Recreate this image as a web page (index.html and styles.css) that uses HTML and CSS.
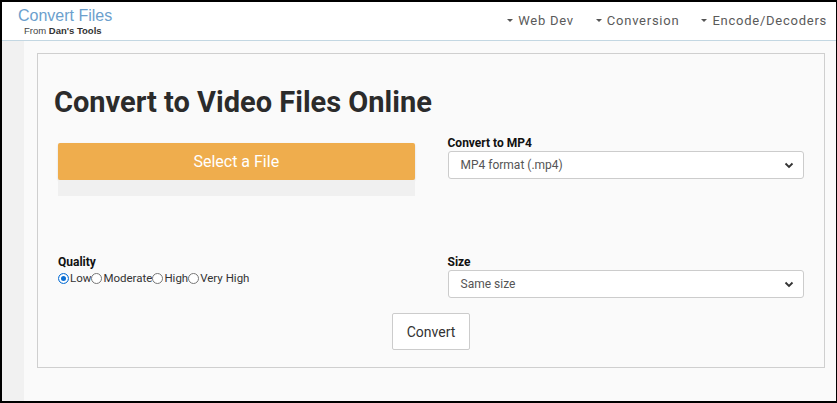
FILE: index.html
```html
<!DOCTYPE html>
<html>
<head>
<meta charset="utf-8">
<link rel="stylesheet" href="styles.css">
</head>
<body>
<div class="frame">
  <header class="topbar">
    <div class="brand">
      <div class="brand-title">Convert Files</div>
      <div class="brand-sub">From <b>Dan's Tools</b></div>
    </div>
    <nav class="nav">
      <span class="nav-item"><span class="caret"></span>Web Dev</span>
      <span class="nav-item"><span class="caret"></span>Conversion</span>
      <span class="nav-item"><span class="caret"></span>Encode/Decoders</span>
    </nav>
  </header>
  <div class="main">
    <div class="sidebar"></div>
    <div class="content">
      <div class="card">
        <h1 class="title">Convert to Video Files Online</h1>
        <div class="row row-top">
          <div class="col">
            <div class="file-btn">Select a File</div>
            <div class="file-bar"></div>
          </div>
          <div class="col">
            <div class="label">Convert to MP4</div>
            <div class="select"><span>MP4 format (.mp4)</span><svg class="chev" width="10" height="7" viewBox="0 0 10 7"><path d="M1.5 1.5 L5 5 L8.5 1.5" fill="none" stroke="#333" stroke-width="1.8"/></svg></div>
          </div>
        </div>
        <div class="row row-bottom">
          <div class="col">
            <div class="label">Quality</div>
            <div class="radios">
              <span class="radio checked"></span>Low<span class="radio"></span>Moderate<span class="radio"></span>High<span class="radio"></span>Very High
            </div>
          </div>
          <div class="col">
            <div class="label">Size</div>
            <div class="select"><span>Same size</span><svg class="chev" width="10" height="7" viewBox="0 0 10 7"><path d="M1.5 1.5 L5 5 L8.5 1.5" fill="none" stroke="#333" stroke-width="1.8"/></svg></div>
          </div>
        </div>
        <div class="actions">
          <div class="convert-btn">Convert</div>
        </div>
      </div>
    </div>
  </div>
</div>
</body>
</html>
```

FILE: styles.css
```css
html, body {
  margin: 0;
  padding: 0;
}
body {
  font-family: Roboto, "Liberation Sans", Arial, sans-serif;
  color: #222;
}
.frame {
  width: 837px;
  height: 403px;
  box-sizing: border-box;
  border-style: solid;
  border-color: #000;
  border-width: 2px 1px 2px 2px;
  display: flex;
  flex-direction: column;
  background: #fafafa;
  overflow: hidden;
}
.topbar {
  height: 38px;
  background: #fff;
  border-bottom: 1px solid #c3d7e2;
  display: flex;
  justify-content: space-between;
  align-items: flex-start;
  flex-shrink: 0;
}
.brand {
  padding: 5px 0 0 16px;
  font-family: "Liberation Sans", Arial, sans-serif;
}
.brand-title {
  font-size: 16px;
  line-height: 18px;
  color: #6c9fcd;
}
.brand-sub {
  font-size: 9.5px;
  line-height: 12px;
  color: #444;
  padding-left: 6px;
}
.brand-sub b {
  color: #333;
}
.nav {
  display: flex;
  gap: 22px;
  padding: 11px 9px 0 0;
}
.nav-item {
  font-size: 13px;
  letter-spacing: 0.75px;
  color: #5a5a5a;
  display: flex;
  align-items: center;
}
.caret {
  display: inline-block;
  width: 0;
  height: 0;
  border-left: 3px solid transparent;
  border-right: 3px solid transparent;
  border-top: 3px solid #555;
  margin-right: 5px;
}
.main {
  flex: 1;
  display: flex;
}
.sidebar {
  width: 22px;
  background: #f1f1f1;
  flex-shrink: 0;
}
.content {
  flex: 1;
  padding: 12px 11px 0 13px;
}
.card {
  border: 1px solid #cfcfcf;
  background: #fafafa;
  height: 315px;
  box-sizing: border-box;
  padding: 0 20px;
}
.title {
  font-size: 29px;
  font-weight: 700;
  color: #2b2b2b;
  margin: 31px 0 0 -4px;
  line-height: 34px;
}
.row {
  display: flex;
  gap: 33px;
}
.col {
  flex: 1;
}
.row-top {
  margin-top: 19px;
  height: 119px;
}
.file-btn {
  margin-top: 5px;
  height: 37px;
  background: #efad4d;
  color: #fff;
  font-size: 16px;
  line-height: 37px;
  text-align: center;
  border-radius: 2px;
  box-shadow: 0 1px 2px rgba(0,0,0,0.15);
}
.file-bar {
  height: 16px;
  background: #f0f0f0;
}
.label {
  font-size: 12px;
  font-weight: 700;
  color: #111;
  line-height: 14px;
  margin-top: -2px;
}
.select {
  margin-top: 1px;
  height: 28px;
  box-sizing: border-box;
  border: 1px solid #ccc;
  border-radius: 3px;
  background: #fff;
  display: flex;
  align-items: center;
  justify-content: space-between;
  padding: 0 9px 0 12px;
  font-size: 12px;
  color: #555;
}
.chev {
  display: block;
}
.radios {
  font-size: 11.5px;
  color: #333;
  display: flex;
  align-items: center;
  line-height: 16px;
  margin-top: 1px;
}
.radio {
  width: 9px;
  height: 9px;
  border: 1px solid #777;
  border-radius: 50%;
  background: #fff;
  display: inline-block;
  margin-right: 1px;
}
.radio.checked {
  border-color: #0b6fd4;
  background: #fff;
  box-shadow: inset 0 0 0 2px #fff, inset 0 0 0 5px #0b6fd4;
}
.actions {
  display: flex;
  justify-content: center;
  margin-top: 15px;
}
.convert-btn {
  width: 78px;
  height: 37px;
  box-sizing: border-box;
  border: 1px solid #ccc;
  border-radius: 2px;
  background: #fff;
  font-size: 14px;
  color: #333;
  display: flex;
  align-items: center;
  justify-content: center;
}
```
